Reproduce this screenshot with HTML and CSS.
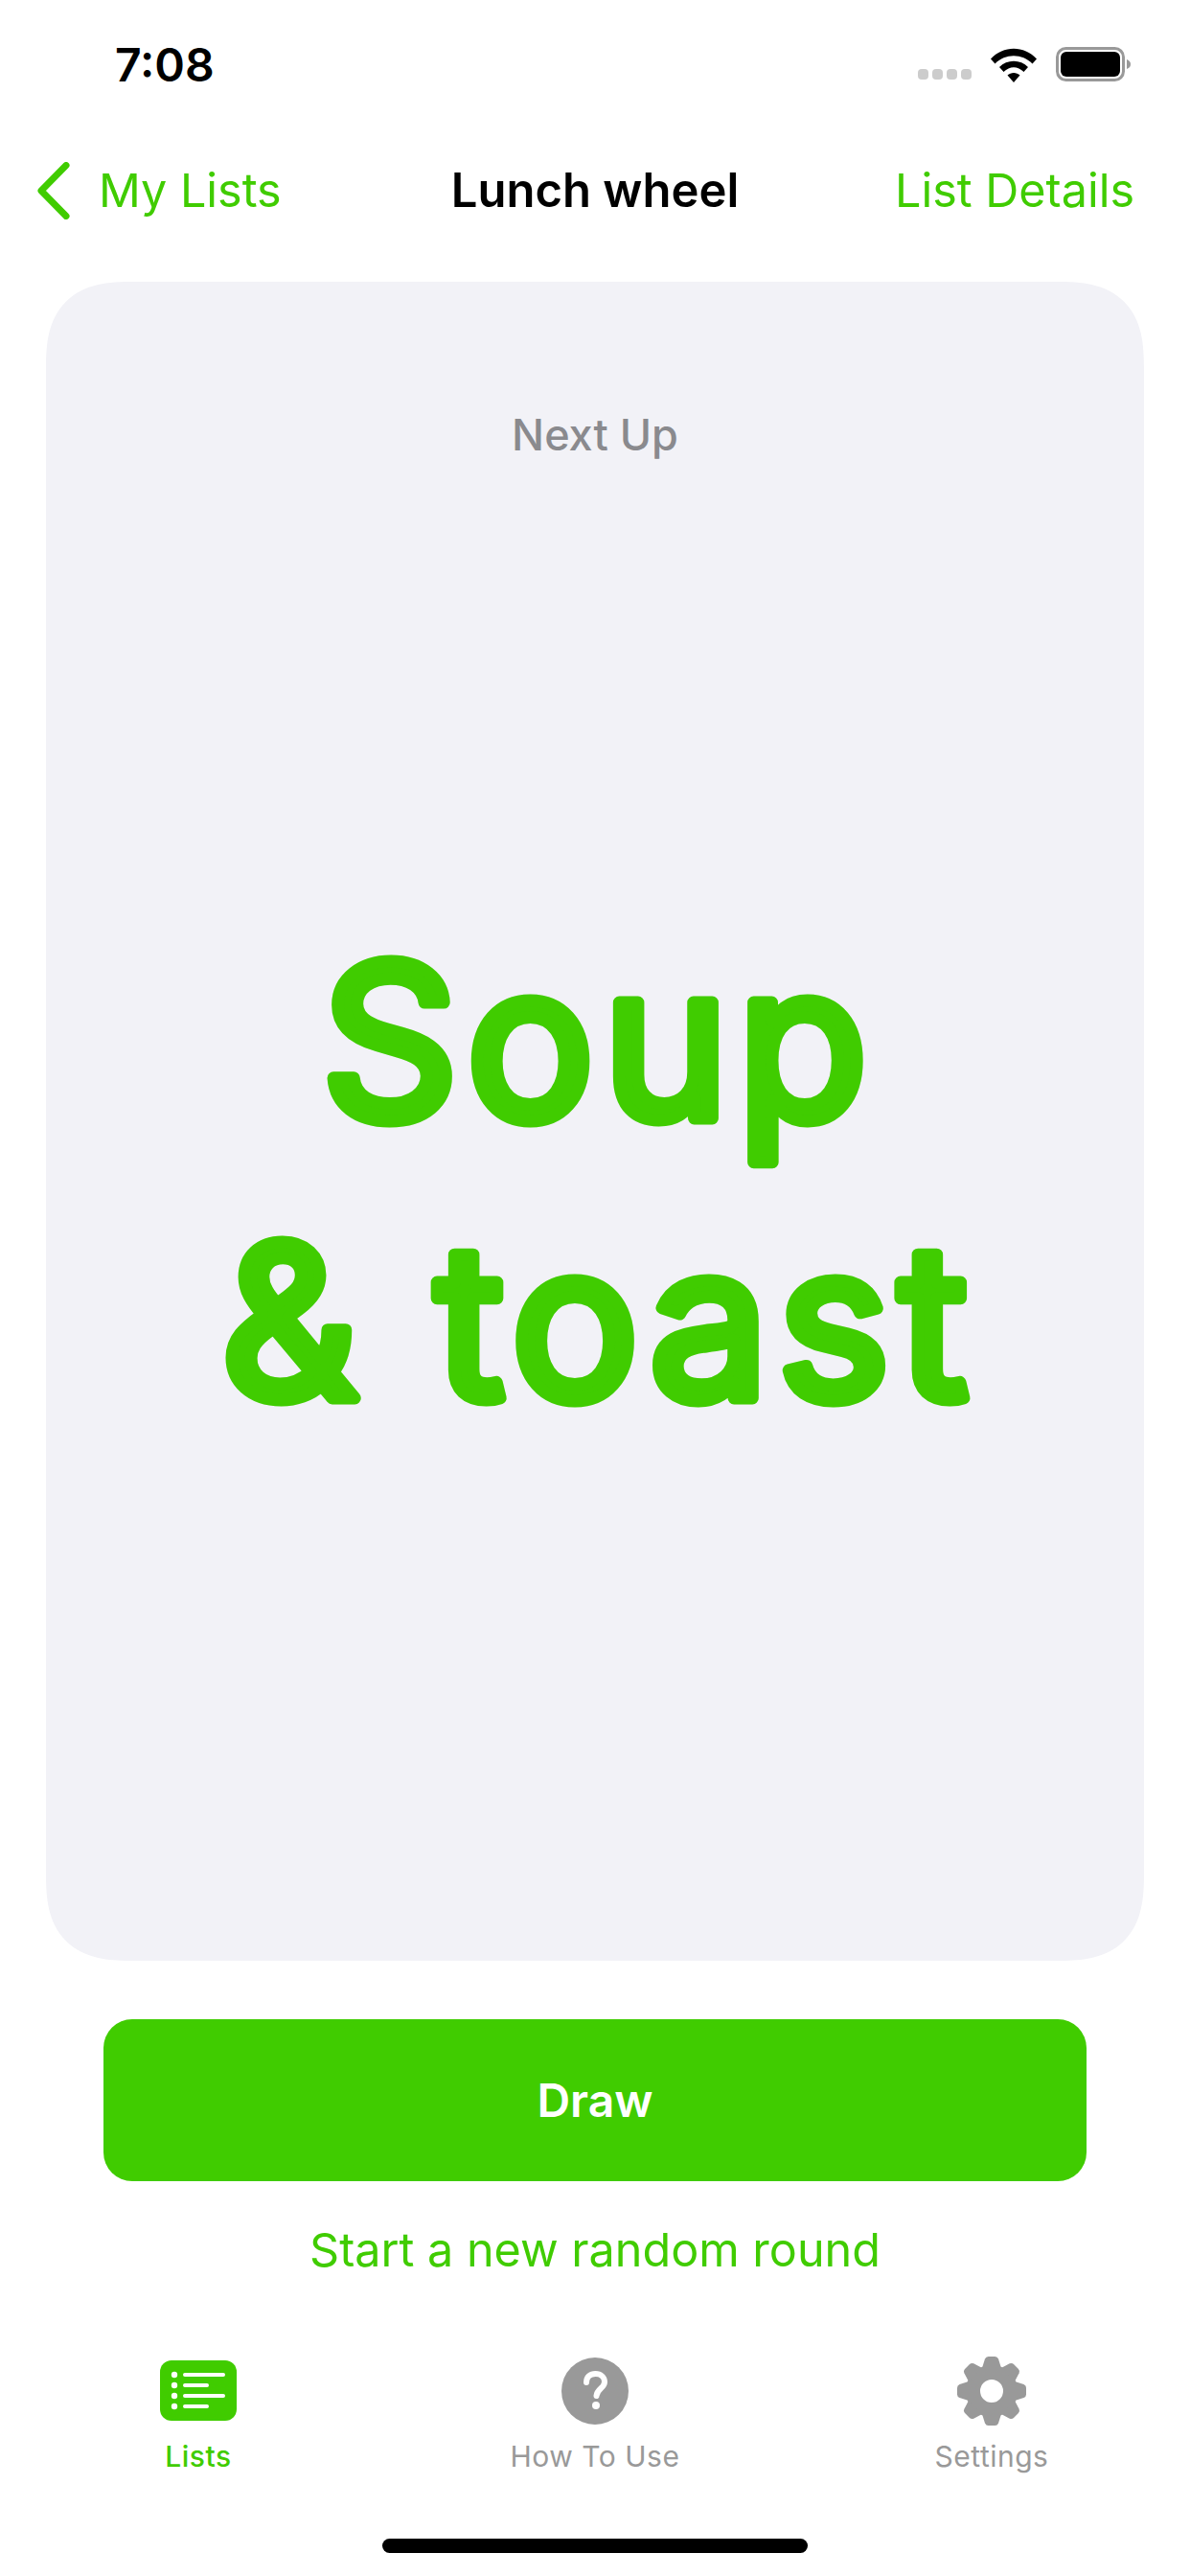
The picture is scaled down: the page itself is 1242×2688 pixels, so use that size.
FILE: index.html
```html
<!DOCTYPE html>
<html lang="en">
<head>
    <meta charset="UTF-8">
    <meta name="viewport" content="width=device-width, initial-scale=1.0">
    <title>Lunch wheel</title>
    <link rel="stylesheet" href="styles.css">
</head>
<body>
    <div class="screen">
        <div class="status-bar">
            <span class="clock">7:08</span>
            <div class="status-icons">
                <div class="signal"><i></i><i></i><i></i><i></i></div>
                <svg class="wifi" width="48" height="36" viewBox="0 0 48 36">
                    <path d="M0 11.5 C13 -3 35 -3 48 11.5 L43.5 16.5 C33 5.500 15 5.500 4.500 16.500 Z" fill="#000"/>
                    <path d="M9 20 C17 11.500 31 11.500 39 20 L34.500 25 C28 18.500 20 18.500 13.500 25 Z" fill="#000"/>
                    <path d="M17.500 28.500 C21 25 27 25 30.500 28.500 L24 36 Z" fill="#000"/>
                </svg>
                <svg class="battery" width="80" height="38" viewBox="0 0 80 38">
                    <rect x="1.500" y="1.500" width="69" height="33" rx="9" fill="none" stroke="#999" stroke-width="3"/>
                    <rect x="5" y="5" width="62" height="26" rx="6" fill="#000"/>
                    <path d="M74 13 C77 14 78 16 78 18 C78 20 77 22 74 23 Z" fill="#999"/>
                </svg>
            </div>
        </div>

        <div class="nav-bar">
            <a class="nav-back">
                <svg width="36" height="60" viewBox="0 0 36 60">
                    <path d="M31 3.500 L5 30 L31 56.500" fill="none" stroke="#40cc00" stroke-width="7" stroke-linecap="round" stroke-linejoin="round"/>
                </svg>
                My Lists
            </a>
            <div class="nav-title">Lunch wheel</div>
            <a class="nav-action">List Details</a>
        </div>

        <div class="card">
            <div class="card-label">Next Up</div>
            <svg class="card-item" width="1146" height="600" viewBox="0 0 1146 600">
                <text x="577" y="238">Soup</text>
                <text x="577" y="530">&amp; toast</text>
            </svg>
        </div>

        <button class="draw-btn">Draw</button>
        <a class="new-round">Start a new random round</a>

        <div class="tab-bar">
            <div class="tab tab-active">
                <svg width="80" height="72" viewBox="0 0 80 72">
                    <rect y="4" width="80" height="63" rx="12" fill="#40cc00"/>
                    <g fill="#fff">
                        <circle cx="15" cy="19" r="3.200"/>
                        <circle cx="15" cy="30" r="3.200"/>
                        <circle cx="15" cy="41" r="3.200"/>
                        <circle cx="15" cy="52" r="3.200"/>
                        <rect x="24" y="17" width="44" height="4" rx="2"/>
                        <rect x="24" y="28" width="27" height="4" rx="2"/>
                        <rect x="24" y="39" width="44" height="4" rx="2"/>
                        <rect x="24" y="50" width="27" height="4" rx="2"/>
                    </g>
                </svg>
                <span>Lists</span>
            </div>
            <div class="tab">
                <svg width="72" height="72" viewBox="0 0 72 72">
                    <circle cx="36" cy="36" r="35" fill="#999"/>
                    <path d="M27 27 C27 21 31 18 36.500 18 C42 18 46 21.500 46 26.500 C46 33 38 33.500 37.500 41" fill="none" stroke="#fff" stroke-width="6" stroke-linecap="round"/>
                    <circle cx="37" cy="51" r="4" fill="#fff"/>
                </svg>
                <span>How To Use</span>
            </div>
            <div class="tab">
                <svg width="72" height="72" viewBox="-36 -36 72 72">
                    <circle r="19.500" fill="none" stroke="#999" stroke-width="15"/>
                    <g fill="#999">
                        <path id="tooth" d="M-10 -24 L-7 -33.500 Q-6 -36 -3.500 -36 L3.500 -36 Q6 -36 7 -33.500 L10 -24 Z"/>
                        <use href="#tooth" transform="rotate(45)"/>
                        <use href="#tooth" transform="rotate(90)"/>
                        <use href="#tooth" transform="rotate(135)"/>
                        <use href="#tooth" transform="rotate(180)"/>
                        <use href="#tooth" transform="rotate(225)"/>
                        <use href="#tooth" transform="rotate(270)"/>
                        <use href="#tooth" transform="rotate(315)"/>
                    </g>
                </svg>
                <span>Settings</span>
            </div>
        </div>

        <div class="home-indicator"></div>
    </div>
</body>
</html>
```

FILE: styles.css
```css
* {
    box-sizing: border-box;
}
body {
    margin: 0;
    background-color: white;
    font-family: Inter, "Liberation Sans", sans-serif;
}
.screen {
    width: 1242px;
    height: 2688px;
    display: flex;
    flex-direction: column;
    align-items: center;
    overflow: hidden;
}
.status-bar {
    width: 100%;
    height: 135px;
    padding: 0 60px 0 120px;
    display: flex;
    justify-content: space-between;
    align-items: center;
}
.clock {
    font-size: 48px;
    font-weight: 600;
    color: #000;
}
.status-icons {
    display: flex;
    align-items: center;
}
.signal {
    display: flex;
    gap: 4px;
    margin-top: 20px;
    margin-right: 20px;
}
.signal i {
    width: 11px;
    height: 11px;
    border-radius: 4px;
    background-color: #ccc;
}
.wifi {
    margin-right: 20px;
}
.nav-bar {
    width: 100%;
    height: 159px;
    padding: 0 38px 32px;
    display: grid;
    grid-template-columns: 1fr auto 1fr;
    align-items: center;
    font-size: 48.500px;
    color: #40cc00;
}
.nav-back {
    display: flex;
    align-items: center;
    gap: 29px;
}
.nav-title {
    font-size: 49px;
    font-weight: 600;
    color: #000;
}
.nav-action {
    justify-self: end;
    margin-right: 20px;
}
.card {
    width: 1146px;
    height: 1752px;
    padding-top: 132px;
    border-radius: 90px;
    corner-shape: superellipse(1.4);
    background-color: #f2f2f7;
    display: flex;
    flex-direction: column;
    align-items: center;
}
.card-label {
    font-size: 45px;
    font-weight: 500;
    color: #8a8a8e;
}
.card-item {
    margin-top: 448px;
    font-size: 222px;
    font-weight: 400;
    letter-spacing: 9px;
    text-anchor: middle;
    fill: #40cc00;
    stroke: #40cc00;
    stroke-width: 13px;
    stroke-linejoin: round;
}
.draw-btn {
    width: 1026px;
    height: 169px;
    margin-top: 61px;
    border: none;
    border-radius: 30px;
    background-color: #40cc00;
    color: white;
    font-family: inherit;
    font-size: 48px;
    font-weight: 600;
}
.new-round {
    margin-top: 40px;
    font-size: 48.500px;
    line-height: 64px;
    color: #40cc00;
}
.tab-bar {
    width: 100%;
    margin-top: 79px;
    display: grid;
    grid-template-columns: repeat(3, 414px);
}
.tab {
    height: 122px;
    display: flex;
    flex-direction: column;
    align-items: center;
    justify-content: space-between;
    font-size: 30px;
    font-weight: 400;
    letter-spacing: 0.500px;
    color: #999;
}
.tab-active {
    font-weight: 500;
    color: #40cc00;
}
.home-indicator {
    width: 444px;
    height: 15px;
    margin-top: 68px;
    border-radius: 8px;
    background-color: #000;
}
```
